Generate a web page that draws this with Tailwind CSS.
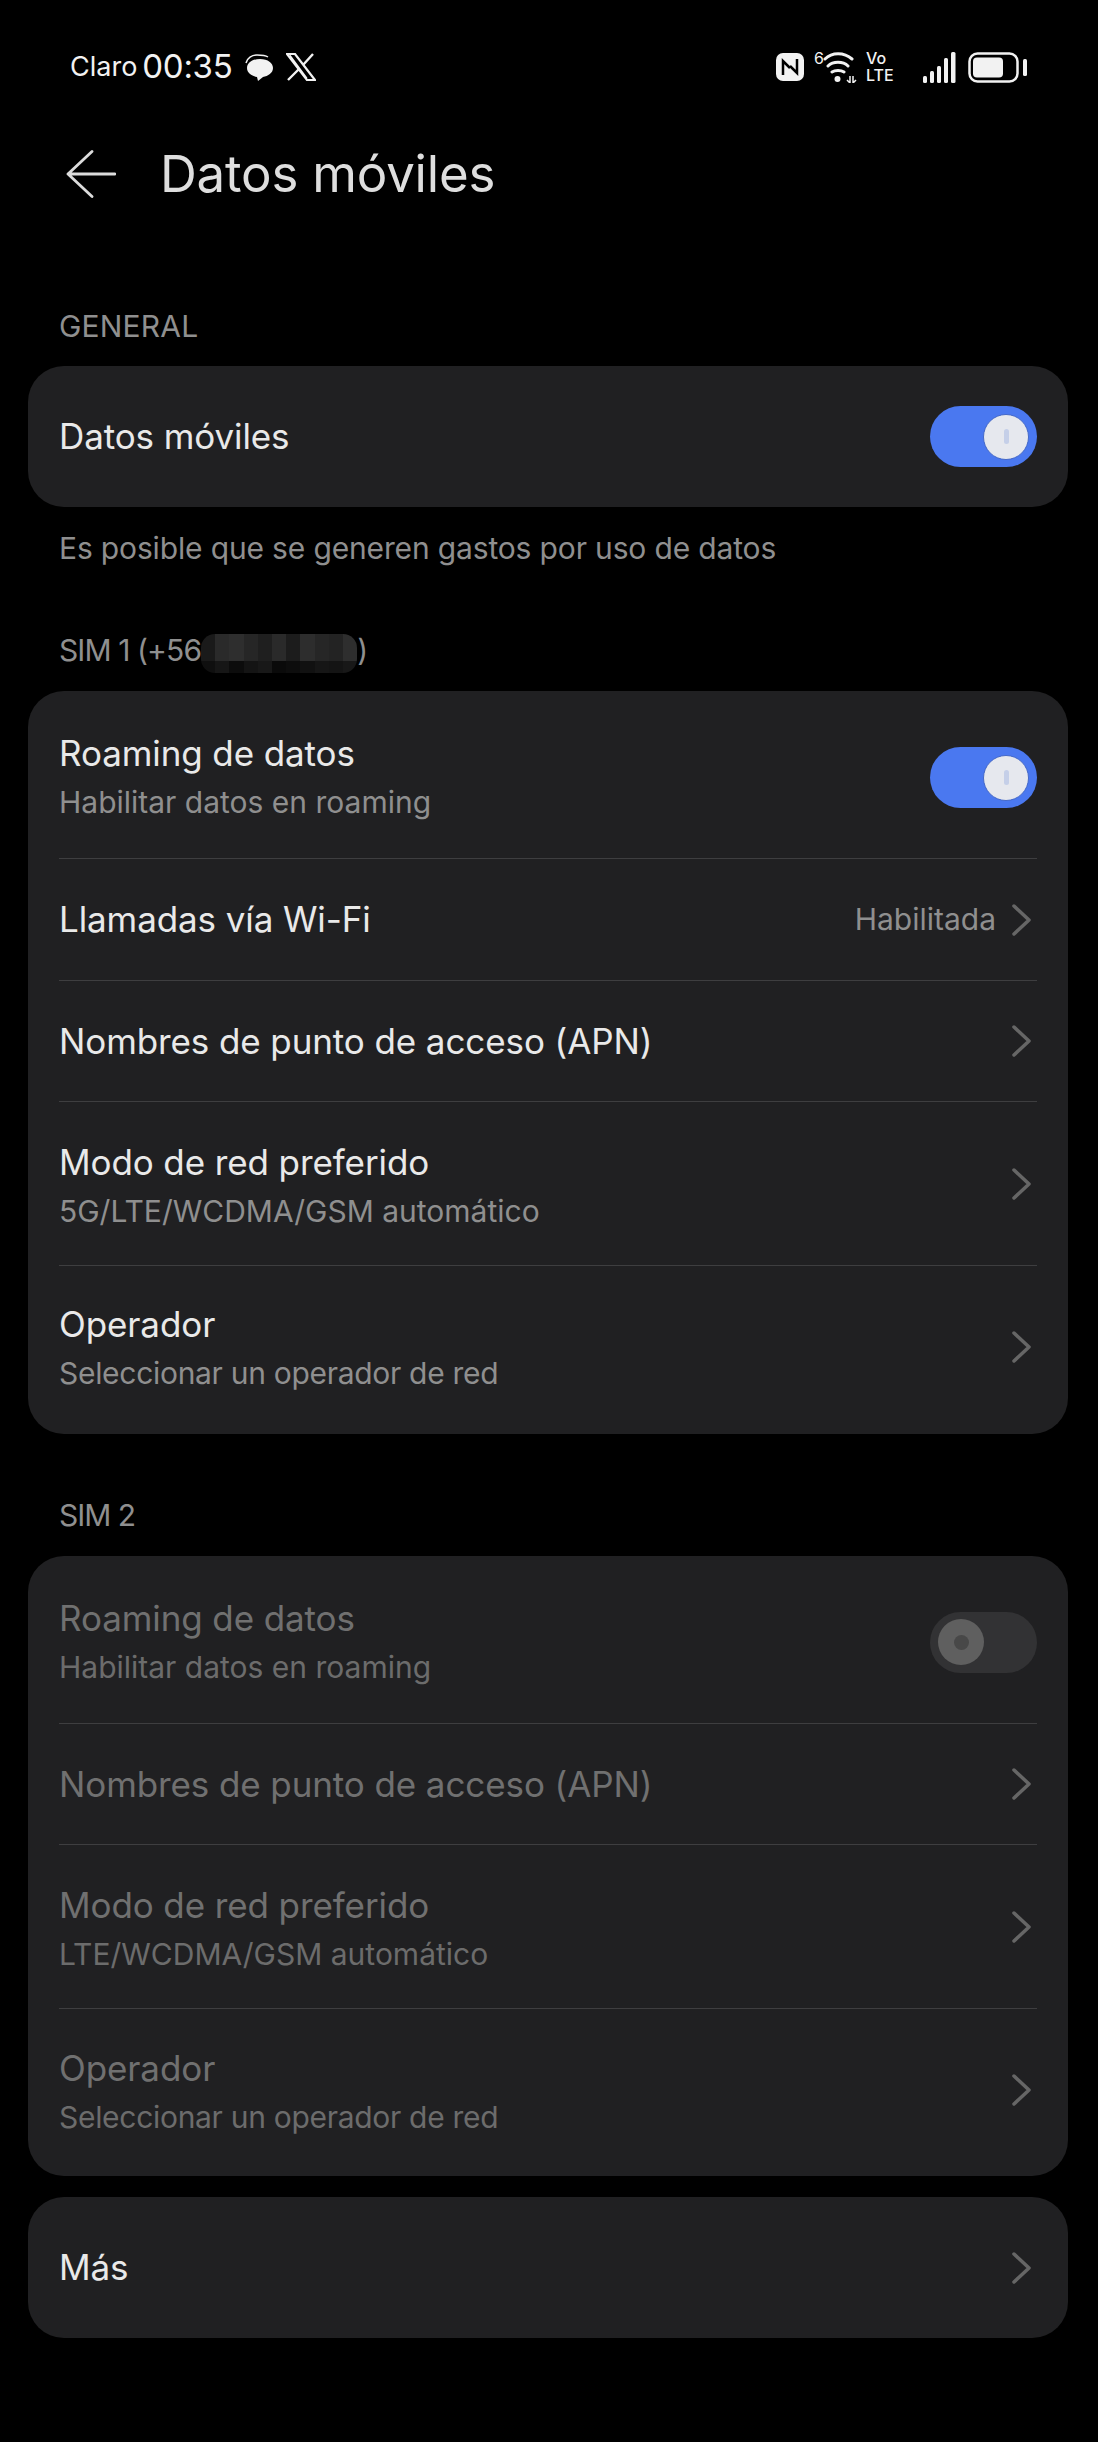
<!DOCTYPE html>
<html lang="es">
<head>
    <meta charset="UTF-8">
    <meta name="viewport" content="width=device-width, initial-scale=1.0">
    <title>Datos móviles</title>
    <script src="https://cdn.jsdelivr.net/npm/@tailwindcss/browser@4"></script>
</head>
<body class="bg-black font-['Inter',sans-serif] w-[1098px] h-[2442px] overflow-hidden">
    <!-- Status bar -->
    <div class="h-[92px] pt-[42px] pl-[70px] pr-[71px] flex items-center justify-between text-[#f2f2f2]">
        <div class="flex items-center">
            <span class="text-[27px]">Claro</span>
            <span class="text-[33px] ml-[5px] tracking-[-0.3px]">00:35</span>
            <svg class="ml-[12px]" width="30" height="30" viewBox="0 0 30 30"><path d="M2 11c1-5 6-8 11-8 4 0 8 0 11 2" fill="none" stroke="#f2f2f2" stroke-width="1.500"/><path d="M3 16c0-5 5-9 13-9s13 4 13 9c0 5-5 8-10 9l-5 4-1-4C8 24 3 21 3 16z" fill="#f2f2f2"/></svg>
            <svg class="ml-[12px]" width="30" height="28" viewBox="0 0 30 28"><path d="M1 1h8l20 26h-8z M3.500 2.500l17 23" fill="none" stroke="#f2f2f2" stroke-width="2.200"/><path d="M27 1 17 12M13 16 2 27" fill="none" stroke="#f2f2f2" stroke-width="2.400"/></svg>
        </div>
        <div class="flex items-center">
            <svg width="28" height="28" viewBox="0 0 28 28"><rect width="28" height="28" rx="7" fill="#f2f2f2"/><path d="M7 22V8l7 7M21 6v14l-7-7" fill="none" stroke="#000" stroke-width="2.500"/></svg>
            <span class="ml-[10px] w-[9px] self-start text-[16px] leading-[16px]">6</span>
            <svg width="36" height="32" viewBox="0 0 36 32"><path d="M2 8C9 1 21 1 29 8M5 15C10 10 20 10 25 15M9 21C12 19 18 19 21 21" fill="none" stroke="#f2f2f2" stroke-width="3" stroke-linecap="round"/><circle cx="14.500" cy="28" r="3" fill="#f2f2f2"/><path d="M27 25v7l-3-3M30 25v7l3-3" fill="none" stroke="#f2f2f2" stroke-width="1.500"/></svg>
            <div class="ml-[7px] w-[32px] text-[16px] leading-[17px] font-medium flex flex-col"><span>Vo</span><span>LTE</span></div>
            <svg class="ml-[25px]" width="33" height="31" viewBox="0 0 33 31"><g fill="#f2f2f2"><rect x="0" y="24" width="4" height="7" rx="1.500"/><rect x="7" y="19" width="4" height="12" rx="1.500"/><rect x="14" y="14" width="4" height="17" rx="1.500"/><rect x="21" y="6" width="4" height="25" rx="1.500"/><rect x="28" y="0" width="4.500" height="31" rx="1.500"/></g></svg>
            <svg class="ml-[12px]" width="59" height="31" viewBox="0 0 59 31"><rect x="1.500" y="1.500" width="48" height="28" rx="8" fill="none" stroke="#f2f2f2" stroke-width="2.500"/><rect x="5" y="5.500" width="30" height="20" rx="4" fill="#f2f2f2"/><rect x="55" y="7" width="4" height="17" rx="1.500" fill="#f2f2f2"/></svg>
        </div>
    </div>

    <!-- Header -->
    <div class="h-[164px] pl-[66px] flex items-center">
        <svg width="50" height="48" viewBox="0 0 50 48"><path d="M26 1.500 2 24l24 22.500M2 24h47" fill="none" stroke="#dcdcdc" stroke-width="2.800" stroke-linecap="round" stroke-linejoin="round"/></svg>
        <h1 class="ml-[44px] text-[51px] text-[#dedede] tracking-[-0.2px]">Datos móviles</h1>
    </div>

    <!-- General -->
    <div class="mt-[49px] pl-[59px] h-[42px] flex items-center text-[30px] text-[#8f8f8f] tracking-[0.2px]">GENERAL</div>
    <div class="ml-[28px] mr-[30px] mt-[19px] h-[141px] rounded-[36px] bg-[#202022] px-[31px] flex items-center justify-between">
        <span class="text-[35px] text-[#e9e9e9] tracking-[-0.1px]">Datos móviles</span>
        <div class="w-[107px] h-[61px] rounded-full bg-[#4a78f0] flex items-center justify-end pr-[8px]">
            <div class="w-[46px] h-[46px] rounded-full bg-[#e6e8ee] border border-[#4468c8] flex items-center justify-center"><div class="w-[5px] h-[15px] rounded-full bg-[#c5cfe8]"></div></div>
        </div>
    </div>
    <p class="mt-[20px] pl-[59px] h-[42px] flex items-center text-[30px] text-[#8f8f8f] tracking-[-0.15px]">Es posible que se generen gastos por uso de datos</p>

    <!-- SIM 1 -->
    <div class="mt-[60px] pl-[59px] h-[42px] flex items-center text-[30px] text-[#8f8f8f]">
        <span class="tracking-[-0.9px]">SIM 1 (+56</span>
        <div class="w-[156px] h-[39px] mt-[6px] rounded-[14px] overflow-hidden grid grid-cols-11 grid-rows-[27px_12px]">
            <div class="bg-[#1a1a1a]"></div><div class="bg-[#2a2a2a]"></div><div class="bg-[#2e2e2e]"></div><div class="bg-[#262626]"></div><div class="bg-[#1f1f1f]"></div><div class="bg-[#2a2a2a]"></div><div class="bg-[#1c1c1c]"></div><div class="bg-[#2d2d2d]"></div><div class="bg-[#262626]"></div><div class="bg-[#232323]"></div><div class="bg-[#2e2e2e]"></div>
            <div class="bg-[#0f0f0f]"></div><div class="bg-[#161616]"></div><div class="bg-[#0c0c0c]"></div><div class="bg-[#141414]"></div><div class="bg-[#181818]"></div><div class="bg-[#0a0a0a]"></div><div class="bg-[#0d0d0d]"></div><div class="bg-[#111]"></div><div class="bg-[#161616]"></div><div class="bg-[#141414]"></div><div class="bg-[#181818]"></div>
        </div>
        <span>)</span>
    </div>
    <div class="ml-[28px] mr-[30px] mt-[20px] rounded-[36px] bg-[#202022] px-[31px] flex flex-col">
        <div class="h-[168px] flex items-center justify-between border-b border-[#3e3e40]">
            <div class="pt-[3px]"><div class="text-[35px] leading-[46px] text-[#e9e9e9] tracking-[-0.1px]">Roaming de datos</div><div class="mt-[6px] text-[30px] leading-[40px] text-[#8f8f8f]">Habilitar datos en roaming</div></div>
            <div class="mt-[6px] w-[107px] h-[61px] rounded-full bg-[#4a78f0] flex items-center justify-end pr-[8px]">
                <div class="w-[46px] h-[46px] rounded-full bg-[#e6e8ee] border border-[#4468c8] flex items-center justify-center"><div class="w-[5px] h-[15px] rounded-full bg-[#c5cfe8]"></div></div>
            </div>
        </div>
        <div class="h-[122px] flex items-center justify-between border-b border-[#3e3e40]">
            <span class="text-[35px] text-[#e9e9e9] tracking-[-0.1px]">Llamadas vía Wi-Fi</span>
            <div class="flex items-center"><span class="text-[30px] text-[#8f8f8f]">Habilitada</span><svg class="ml-[16px] mr-[6px]" width="19" height="32" viewBox="0 0 19 32"><path d="M2 2l15 14L2 30" fill="none" stroke="#666" stroke-width="3.500" stroke-linecap="round" stroke-linejoin="round"/></svg></div>
        </div>
        <div class="h-[121px] flex items-center justify-between border-b border-[#3e3e40]">
            <span class="text-[35px] text-[#e9e9e9] tracking-[-0.1px]">Nombres de punto de acceso (APN)</span>
            <svg class="mr-[6px]" width="19" height="32" viewBox="0 0 19 32"><path d="M2 2l15 14L2 30" fill="none" stroke="#666" stroke-width="3.500" stroke-linecap="round" stroke-linejoin="round"/></svg>
        </div>
        <div class="h-[164px] flex items-center justify-between border-b border-[#3e3e40]">
            <div class="pt-[3px]"><div class="text-[35px] leading-[46px] text-[#e9e9e9] tracking-[-0.1px]">Modo de red preferido</div><div class="mt-[6px] text-[30px] leading-[40px] text-[#8f8f8f]">5G/LTE/WCDMA/GSM automático</div></div>
            <svg class="mr-[6px]" width="19" height="32" viewBox="0 0 19 32"><path d="M2 2l15 14L2 30" fill="none" stroke="#666" stroke-width="3.500" stroke-linecap="round" stroke-linejoin="round"/></svg>
        </div>
        <div class="h-[168px] pb-[6px] flex items-center justify-between">
            <div><div class="text-[35px] leading-[46px] text-[#e9e9e9] tracking-[-0.1px]">Operador</div><div class="mt-[6px] text-[30px] leading-[40px] text-[#8f8f8f] tracking-[-0.3px]">Seleccionar un operador de red</div></div>
            <svg class="mr-[6px]" width="19" height="32" viewBox="0 0 19 32"><path d="M2 2l15 14L2 30" fill="none" stroke="#666" stroke-width="3.500" stroke-linecap="round" stroke-linejoin="round"/></svg>
        </div>
    </div>

    <!-- SIM 2 -->
    <div class="mt-[60px] pl-[59px] h-[42px] flex items-center text-[30px] text-[#8f8f8f] tracking-[-1px]">SIM 2</div>
    <div class="ml-[28px] mr-[30px] mt-[20px] rounded-[36px] bg-[#202022] px-[31px] flex flex-col">
        <div class="h-[168px] flex items-center justify-between border-b border-[#3e3e40]">
            <div class="pt-[3px]"><div class="text-[35px] leading-[46px] text-[#707070] tracking-[-0.1px]">Roaming de datos</div><div class="mt-[6px] text-[30px] leading-[40px] text-[#6c6c6c]">Habilitar datos en roaming</div></div>
            <div class="mt-[5px] w-[107px] h-[61px] rounded-full bg-[#323234] flex items-center pl-[8px]">
                <div class="w-[46px] h-[46px] rounded-full bg-[#5f5f5f] flex items-center justify-center"><div class="w-[15px] h-[15px] rounded-full bg-[#484848]"></div></div>
            </div>
        </div>
        <div class="h-[121px] flex items-center justify-between border-b border-[#3e3e40]">
            <span class="text-[35px] text-[#707070] tracking-[-0.1px]">Nombres de punto de acceso (APN)</span>
            <svg class="mr-[6px]" width="19" height="32" viewBox="0 0 19 32"><path d="M2 2l15 14L2 30" fill="none" stroke="#666" stroke-width="3.500" stroke-linecap="round" stroke-linejoin="round"/></svg>
        </div>
        <div class="h-[164px] flex items-center justify-between border-b border-[#3e3e40]">
            <div class="pt-[3px]"><div class="text-[35px] leading-[46px] text-[#707070] tracking-[-0.1px]">Modo de red preferido</div><div class="mt-[6px] text-[30px] leading-[40px] text-[#6c6c6c]">LTE/WCDMA/GSM automático</div></div>
            <svg class="mr-[6px]" width="19" height="32" viewBox="0 0 19 32"><path d="M2 2l15 14L2 30" fill="none" stroke="#666" stroke-width="3.500" stroke-linecap="round" stroke-linejoin="round"/></svg>
        </div>
        <div class="h-[167px] pb-[5px] flex items-center justify-between">
            <div class="pt-[1px]"><div class="text-[35px] leading-[46px] text-[#707070] tracking-[-0.1px]">Operador</div><div class="mt-[6px] text-[30px] leading-[40px] text-[#6c6c6c] tracking-[-0.3px]">Seleccionar un operador de red</div></div>
            <svg class="mr-[6px]" width="19" height="32" viewBox="0 0 19 32"><path d="M2 2l15 14L2 30" fill="none" stroke="#666" stroke-width="3.500" stroke-linecap="round" stroke-linejoin="round"/></svg>
        </div>
    </div>

    <!-- Más -->
    <div class="ml-[28px] mr-[30px] mt-[21px] h-[141px] rounded-[36px] bg-[#202022] px-[31px] flex items-center justify-between">
        <span class="text-[35px] text-[#e9e9e9] tracking-[-0.1px]">Más</span>
        <svg class="mr-[6px]" width="19" height="32" viewBox="0 0 19 32"><path d="M2 2l15 14L2 30" fill="none" stroke="#666" stroke-width="3.500" stroke-linecap="round" stroke-linejoin="round"/></svg>
    </div>
</body>
</html>
